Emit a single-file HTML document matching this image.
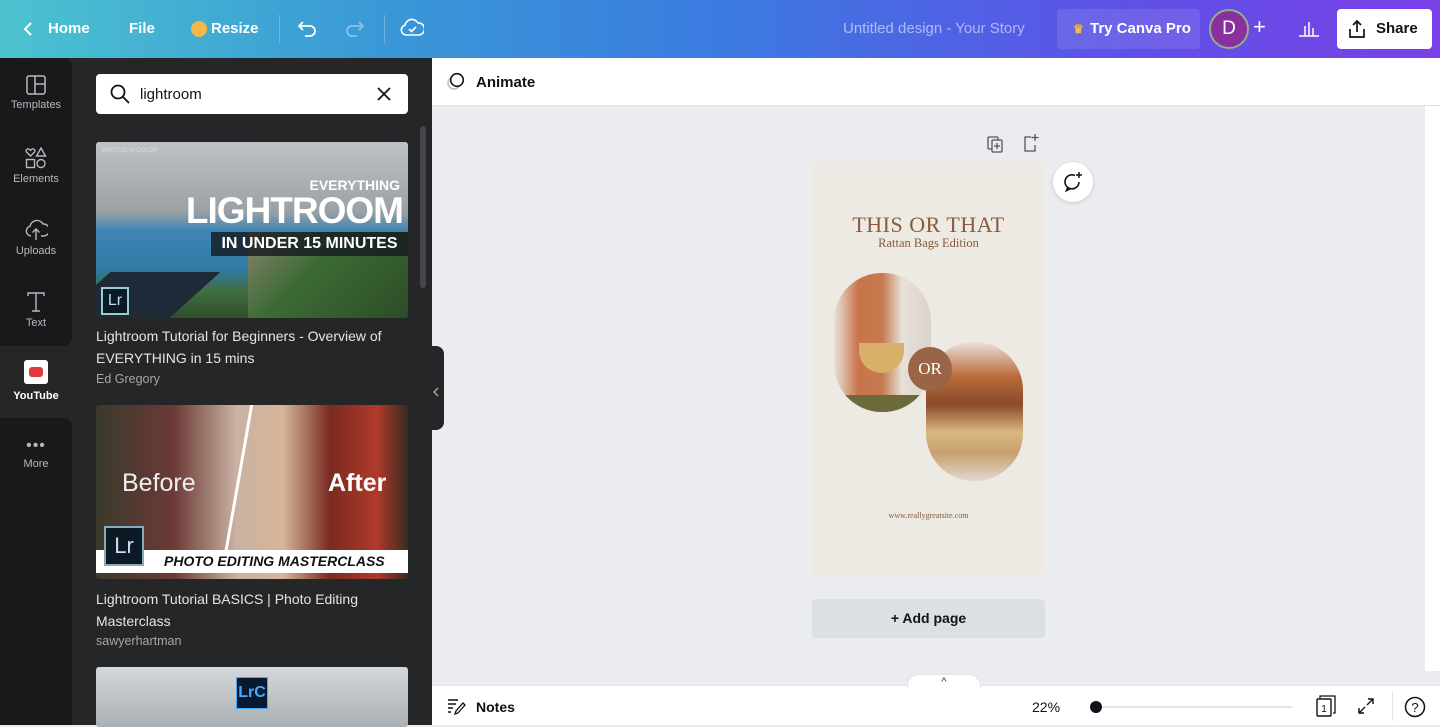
<!DOCTYPE html>
<html><head><meta charset="utf-8">
<style>
*{box-sizing:border-box;margin:0;padding:0}
body{width:1440px;height:725px;overflow:hidden;font-family:"Liberation Sans",sans-serif;background:#ebecf0;position:relative}
.top{position:absolute;left:0;top:0;width:1440px;height:58px;background:linear-gradient(90deg,#4cc3cf 0%,#3a9ad6 25%,#3b7be0 50%,#5a55e6 75%,#7a3fe8 100%);color:#fff;font-weight:bold;font-size:15px}
.top span{position:absolute;top:20px}
.rail{position:absolute;left:0;top:58px;width:72px;height:667px;background:#252627}
.railbox{position:absolute;left:0;width:72px;background:#18191b;border-radius:0 8px 8px 0}
.ri{position:absolute;left:0;width:72px;text-align:center;color:#b8b9bc;font-size:11px}
.ri svg{display:block;margin:0 auto 4px}
.panel{position:absolute;left:72px;top:58px;width:360px;height:667px;background:#252627}
.search{position:absolute;left:24px;top:16px;width:312px;height:40px;background:#fff;border-radius:4px}
.cap{position:absolute;left:24px;color:#e4e5e7;font-size:14px;line-height:22px;width:316px}
.auth{position:absolute;left:24px;color:#a5a6a9;font-size:12.5px}
.thumb{position:absolute;left:24px;width:312px;overflow:hidden;border-radius:3px}
.ed{position:absolute;left:432px;top:58px;width:1008px;height:667px}
</style></head><body>
<div class="top">
  <svg style="position:absolute;left:22px;top:21px" width="12" height="16" viewBox="0 0 12 16"><path d="M9 2L3 8l6 6" stroke="#fff" stroke-width="2" fill="none"/></svg>
  <span style="left:48px">Home</span>
  <span style="left:129px">File</span>
  <div style="position:absolute;left:191px;top:21px;width:16px;height:16px;border-radius:50%;background:#f2b84a"></div>
  <span style="left:211px">Resize</span>
  <div style="position:absolute;left:279px;top:15px;width:1px;height:28px;background:rgba(255,255,255,.25)"></div>
  <svg style="position:absolute;left:297px;top:19px" width="22" height="18" viewBox="0 0 22 18"><path d="M6 3L2 7l4 4M2 7h11a5 5 0 010 10H8" stroke="#fff" stroke-width="1.8" fill="none"/></svg>
  <svg style="position:absolute;left:343px;top:19px;opacity:.4" width="22" height="18" viewBox="0 0 22 18"><path d="M16 3l4 4-4 4M20 7H9a5 5 0 000 10h5" stroke="#fff" stroke-width="1.8" fill="none"/></svg>
  <div style="position:absolute;left:384px;top:15px;width:1px;height:28px;background:rgba(255,255,255,.25)"></div>
  <svg style="position:absolute;left:400px;top:17px" width="24" height="22" viewBox="0 0 24 22"><path d="M6 18a5 5 0 01-1-9.8A7 7 0 0118 6a5 5 0 011 12z" stroke="#fff" stroke-width="1.6" fill="none"/><path d="M9 12l2.5 2.5L16 10" stroke="#fff" stroke-width="1.6" fill="none"/></svg>
  <span style="left:843px;font-weight:normal;color:rgba(255,255,255,.55)">Untitled design - Your Story</span>
  <div style="position:absolute;left:1057px;top:9px;width:143px;height:40px;background:rgba(255,255,255,.1);border-radius:4px"></div>
  <span style="left:1073px;color:#f2b84a;font-size:12px;top:22px">♛</span>
  <span style="left:1090px">Try Canva Pro</span>
  <div style="position:absolute;left:1209px;top:9px;width:40px;height:40px;border-radius:50%;background:#8a2f9e;border:2px solid #8fb08a;font-weight:normal;font-size:19px;text-align:center;line-height:36px">D</div>
  <span style="left:1253px;font-size:22px;font-weight:normal;top:14px">+</span>
  <svg style="position:absolute;left:1298px;top:19px" width="22" height="18" viewBox="0 0 22 18"><path d="M1 17h20M7 7v10M11 3v14M15 9v8" stroke="#fff" stroke-width="1.5"/></svg>
  <div style="position:absolute;left:1337px;top:9px;width:95px;height:40px;background:#fff;border-radius:4px;color:#0e1318;font-size:15px">
    <svg style="position:absolute;left:10px;top:10px" width="20" height="20" viewBox="0 0 20 20"><path d="M10 13V2M6 6l4-4 4 4M3 10v8h14v-8" stroke="#0e1318" stroke-width="1.7" fill="none"/></svg>
    <span style="position:absolute;left:39px;top:11px">Share</span></div>
</div>

<div class="rail">
  <div class="railbox" style="top:0;height:288px"></div>
  <div class="railbox" style="top:360px;height:307px;border-radius:0 8px 0 0"></div>
  <div class="ri" style="top:17px"><svg width="20" height="20" viewBox="0 0 20 20"><rect x="1" y="1" width="18" height="18" rx="2" stroke="#b8b9bc" stroke-width="1.5" fill="none"/><path d="M9 1v18M9 9h10" stroke="#b8b9bc" stroke-width="1.5"/></svg>Templates</div>
  <div class="ri" style="top:89px"><svg width="22" height="22" viewBox="0 0 22 22"><path d="M5.5 9L1.5 5a2 2 0 013-2.6l1 1 1-1A2 2 0 019.5 5z" stroke="#b8b9bc" stroke-width="1.4" fill="none"/><path d="M16 1l4.5 8h-9z" stroke="#b8b9bc" stroke-width="1.4" fill="none"/><rect x="1.5" y="12.5" width="8" height="8" stroke="#b8b9bc" stroke-width="1.4" fill="none"/><circle cx="16" cy="16.5" r="4" stroke="#b8b9bc" stroke-width="1.4" fill="none"/></svg>Elements</div>
  <div class="ri" style="top:161px"><svg width="24" height="22" viewBox="0 0 24 22"><path d="M7 17a5 5 0 01-1-9.8A7 7 0 0119 5a5 5 0 011 12h-3" stroke="#b8b9bc" stroke-width="1.4" fill="none"/><path d="M12 21V10M8.5 13.5L12 10l3.5 3.5" stroke="#b8b9bc" stroke-width="1.4" fill="none"/></svg>Uploads</div>
  <div class="ri" style="top:233px"><svg width="20" height="22" viewBox="0 0 20 22"><path d="M2 5V2h16v3M10 2v18M6 20h8" stroke="#b8b9bc" stroke-width="1.4" fill="none"/></svg>Text</div>
  <div class="ri" style="top:302px;color:#fff;font-weight:bold"><div style="width:24px;height:24px;background:#fff;border-radius:3px;margin:0 auto 6px;position:relative"><div style="position:absolute;left:5px;top:7px;width:14px;height:10px;background:#e03a3a;border-radius:3px"></div></div>YouTube</div>
  <div class="ri" style="top:382px"><div style="font-size:16px;letter-spacing:1px;line-height:12px;margin-bottom:6px">•••</div>More</div>
</div>

<div class="panel">
  <div class="search">
    <svg style="position:absolute;left:14px;top:10px" width="20" height="20" viewBox="0 0 20 20"><circle cx="8" cy="8" r="6.5" stroke="#0e1318" stroke-width="1.8" fill="none"/><path d="M13 13l6 6" stroke="#0e1318" stroke-width="1.8"/></svg>
    <span style="position:absolute;left:44px;top:12px;font-size:15px;color:#0e1318">lightroom</span>
    <svg style="position:absolute;left:281px;top:13px" width="14" height="14" viewBox="0 0 14 14"><path d="M1 1l12 12M13 1L1 13" stroke="#0e1318" stroke-width="1.8"/></svg>
  </div>
  <div style="position:absolute;left:348px;top:68px;width:6px;height:162px;background:#45464a;border-radius:3px"></div>

  <div class="thumb" style="top:84px;height:176px;background:linear-gradient(180deg,#bfc3c6 0%,#9aa0a3 40%,#3f86b3 50%,#2f7aa6 72%,#3f6e3f 85%,#2f4d2a 100%)">
    <div style="position:absolute;right:0;top:90px;width:160px;height:86px;background:linear-gradient(135deg,#8a8470,#3d6b36 40%,#2c4d26)"></div>
    <div style="position:absolute;left:-30px;top:130px;width:110px;height:80px;background:#1e2a38;transform:skewX(-48deg)"></div>
    <div style="position:absolute;left:6px;top:6px;font-size:6px;color:#ddd">PHOTOS IN COLOR</div>
    <div style="position:absolute;right:8px;top:35px;color:#fff;font-weight:bold;font-size:14px">EVERYTHING</div>
    <div style="position:absolute;right:5px;top:48px;color:#fff;font-weight:bold;font-size:37px;letter-spacing:-1px">LIGHTROOM</div>
    <div style="position:absolute;right:0;top:90px;width:197px;height:24px;background:rgba(20,25,30,.8);color:#fff;font-weight:bold;font-size:16px;line-height:24px;text-align:center">IN UNDER 15 MINUTES</div>
    <div style="position:absolute;left:5px;top:145px;width:28px;height:28px;border:2px solid #9cc;background:#0c1a26;color:#bde;font-size:16px;line-height:24px;text-align:center">Lr</div>
  </div>
  <div class="cap" style="top:267px">Lightroom Tutorial for Beginners - Overview of EVERYTHING in 15 mins</div>
  <div class="auth" style="top:314px">Ed Gregory</div>

  <div class="thumb" style="top:347px;height:174px;background:linear-gradient(90deg,#3a3a2c 0%,#6b3a36 25%,#c9b2a3 45%,#d6b59a 60%,#7a2a20 75%,#b03a2a 90%,#3a2a22 100%)">
    <div style="position:absolute;left:141px;top:0;width:3px;height:150px;background:#fff;transform:skewX(-10deg)"></div>
    <div style="position:absolute;left:26px;top:64px;color:#eee;font-size:25px">Before</div>
    <div style="position:absolute;left:232px;top:64px;color:#fff;font-size:25px;font-weight:bold">After</div>
    <div style="position:absolute;left:0;top:145px;width:312px;height:23px;background:#fff;color:#111;font-weight:bold;font-style:italic;font-size:14px;line-height:23px;padding-left:68px">PHOTO EDITING MASTERCLASS</div>
    <div style="position:absolute;left:8px;top:121px;width:40px;height:40px;border:2px solid #8ab;background:#0c1a26;color:#cde;font-size:22px;line-height:36px;text-align:center">Lr</div>
  </div>
  <div class="cap" style="top:530px">Lightroom Tutorial BASICS | Photo Editing Masterclass</div>
  <div class="auth" style="top:576px">sawyerhartman</div>

  <div class="thumb" style="top:609px;height:60px;background:linear-gradient(180deg,#d5d8da,#a9afb3)">
    <div style="position:absolute;left:140px;top:10px;width:32px;height:32px;background:#0a1a2e;border:1px solid #4af;color:#4af;font-weight:bold;font-size:16px;line-height:30px;text-align:center">LrC</div>
  </div>
</div>

<div style="position:absolute;left:431px;top:346px;width:13px;height:84px;background:#252627;border-radius:0 8px 8px 0"></div>
<svg style="position:absolute;left:432px;top:387px" width="8" height="10" viewBox="0 0 8 10"><path d="M6 1L2 5l4 4" stroke="#aaa" stroke-width="1.4" fill="none"/></svg>

<div class="ed">
  <div style="position:absolute;left:0;top:0;width:1008px;height:48px;background:#fff;border-bottom:1px solid #dfe1e5"></div>
  <svg style="position:absolute;left:13px;top:13px" width="22" height="22" viewBox="0 0 22 22"><circle cx="9" cy="12" r="6" stroke="#bbb" stroke-width="1.4" fill="none"/><circle cx="12" cy="9" r="6.3" stroke="#0e1318" stroke-width="1.6" fill="#fff"/></svg>
  <div style="position:absolute;left:44px;top:16px;font-size:15px;font-weight:bold;color:#0e1318">Animate</div>
  <div style="position:absolute;left:993px;top:48px;width:15px;height:565px;background:#fff"></div>
  <svg style="position:absolute;left:554px;top:77px" width="18" height="18" viewBox="0 0 18 18"><rect x="2" y="2" width="10" height="12" rx="1" stroke="#555" stroke-width="1.3" fill="none"/><rect x="6" y="5" width="10" height="12" rx="1" stroke="#555" stroke-width="1.3" fill="#ebecf0"/><path d="M11 8v6M8 11h6" stroke="#555" stroke-width="1.3"/></svg>
  <svg style="position:absolute;left:590px;top:75px" width="18" height="20" viewBox="0 0 18 20"><path d="M9 4H3v14h10v-6" stroke="#555" stroke-width="1.3" fill="none"/><path d="M13 1v7M9.5 4.5h7" stroke="#555" stroke-width="1.3"/></svg>
  <div style="position:absolute;left:621px;top:104px;width:40px;height:40px;border-radius:50%;background:#fff;box-shadow:0 1px 4px rgba(0,0,0,.15)"></div>
  <svg style="position:absolute;left:630px;top:113px" width="22" height="22" viewBox="0 0 22 22"><path d="M13 4.5A7 7 0 1 0 17 11M6 16l-1.5 3.5 4-2" stroke="#0e1318" stroke-width="1.6" fill="none"/><path d="M17 1v6M14 4h6" stroke="#0e1318" stroke-width="1.5"/></svg>

  <div style="position:absolute;left:380px;top:104px;width:233px;height:413px;background:#ede9e3;font-family:'Liberation Serif',serif;color:#8a5a3a;text-align:center">
    <div style="position:absolute;left:0;width:233px;top:50px;font-size:22px;letter-spacing:.5px">THIS OR THAT</div>
    <div style="position:absolute;left:0;width:233px;top:74px;font-size:12.5px">Rattan Bags Edition</div>
    <div style="position:absolute;left:22px;top:111px;width:97px;height:139px;border-radius:48px;overflow:hidden;background:linear-gradient(90deg,#e8e2dc 0%,#c9744a 25%,#c67a50 50%,#e6e0d8 70%,#dcd4cc 100%)">
      <div style="position:absolute;left:25px;top:70px;width:45px;height:30px;border-radius:0 0 25px 25px;background:#d9b06a"></div>
      <div style="position:absolute;left:0;top:122px;width:97px;height:20px;background:#6c6a3a"></div>
    </div>
    <div style="position:absolute;left:114px;top:180px;width:97px;height:139px;border-radius:48px;overflow:hidden;background:linear-gradient(180deg,#e9e2d9 0%,#b96a3a 25%,#8a4a2a 45%,#d9b882 65%,#c9a06e 80%,#e0d8cf 100%)"></div>
    <div style="position:absolute;left:96px;top:185px;width:44px;height:44px;border-radius:50%;background:#9a6446;color:#fff;font-size:17px;line-height:44px">OR</div>
    <div style="position:absolute;left:0;width:233px;top:349px;font-size:8px">www.reallygreatsite.com</div>
  </div>
  <div style="position:absolute;left:380px;top:541px;width:233px;height:39px;background:#dcdfe4;border-radius:4px;font-size:14px;font-weight:bold;color:#0e1318;text-align:center;line-height:39px">+ Add page</div>

  <div style="position:absolute;left:0;top:627px;width:1008px;height:40px;background:#fff;border-top:1px solid #e3e4e7"></div>
  <div style="position:absolute;left:475px;top:616px;width:74px;height:14px;background:#fff;border-radius:12px 12px 0 0;border:1px solid #e3e4e7;border-bottom:none;font-size:11px;text-align:center;line-height:14px;color:#333">^</div>
  <svg style="position:absolute;left:15px;top:640px" width="20" height="18" viewBox="0 0 20 18"><path d="M1 2h10M1 6h8M1 10h5M1 14h3" stroke="#0e1318" stroke-width="1.4"/><path d="M8 16l1-3 7-8 2 2-7 8z" stroke="#0e1318" stroke-width="1.3" fill="none"/></svg>
  <div style="position:absolute;left:44px;top:641px;font-size:14px;color:#0e1318;font-weight:bold">Notes</div>
  <div style="position:absolute;left:600px;top:641px;font-size:14px;color:#0e1318">22%</div>
  <div style="position:absolute;left:664px;top:648px;width:196px;height:2px;background:#e3e4e7"></div>
  <div style="position:absolute;left:658px;top:643px;width:12px;height:12px;border-radius:50%;background:#0e1318"></div>
  <svg style="position:absolute;left:883px;top:637px" width="22" height="22" viewBox="0 0 22 22"><path d="M5 3V1h15v17h-2" stroke="#0e1318" stroke-width="1.3" fill="none"/><rect x="2" y="4" width="14" height="17" rx="1" stroke="#0e1318" stroke-width="1.4" fill="#fff"/><text x="9" y="17" font-size="10" text-anchor="middle" font-family="Liberation Sans" fill="#0e1318">1</text></svg>
  <svg style="position:absolute;left:925px;top:639px" width="18" height="18" viewBox="0 0 18 18"><path d="M11 2h5v5M16 2l-6 6M7 16H2v-5M2 16l6-6" stroke="#0e1318" stroke-width="1.4" fill="none"/></svg>
  <div style="position:absolute;left:960px;top:633px;width:1px;height:30px;background:#e3e4e7"></div>
  <svg style="position:absolute;left:972px;top:638px" width="22" height="22" viewBox="0 0 22 22"><circle cx="11" cy="11" r="9.5" stroke="#0e1318" stroke-width="1.5" fill="none"/><text x="11" y="16" font-size="13" text-anchor="middle" font-family="Liberation Sans" fill="#0e1318">?</text></svg>
</div>
</body></html>
